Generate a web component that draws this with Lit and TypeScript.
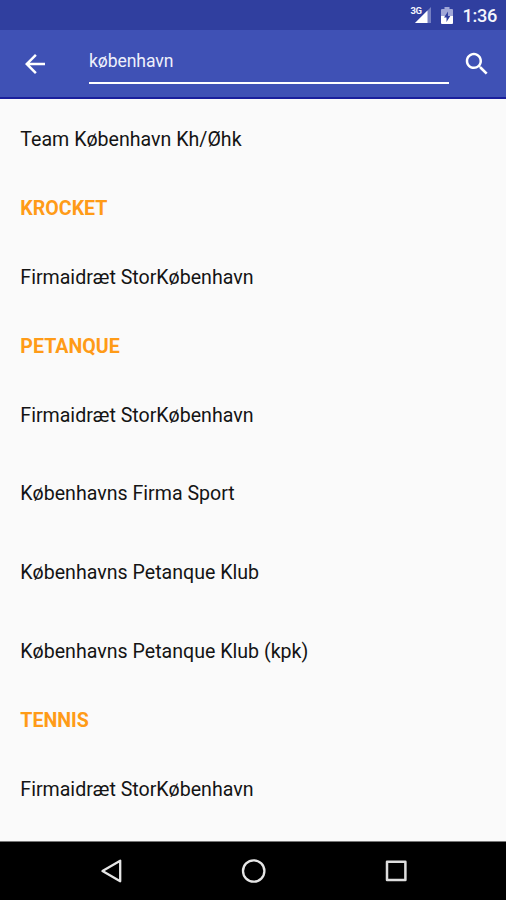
import { LitElement, html, css, svg } from "lit";
import { customElement } from "lit/decorators.js";

type Row = { text: string; header?: boolean };

const rows: Row[] = [
  { text: "Team København Kh/Øhk" },
  { text: "KROCKET", header: true },
  { text: "Firmaidræt StorKøbenhavn" },
  { text: "PETANQUE", header: true },
  { text: "Firmaidræt StorKøbenhavn" },
  { text: "Københavns Firma Sport" },
  { text: "Københavns Petanque Klub" },
  { text: "Københavns Petanque Klub (kpk)" },
  { text: "TENNIS", header: true },
  { text: "Firmaidræt StorKøbenhavn" },
];

@customElement("app-root")
export class AppRoot extends LitElement {
  static styles = css`
    :host {
      display: flex;
      flex-direction: column;
      height: 900px;
      overflow: hidden;
      background: #fafafa;
      font-family: Roboto, "Noto Sans", sans-serif;
      color: #141414;
    }
    svg { display: block; flex: none; }
    .status {
      flex: none;
      box-sizing: border-box;
      height: 30px;
      padding: 2px 9px 0 0;
      display: flex;
      justify-content: flex-end;
      align-items: center;
      background: #303f9f;
      color: #f4f5fc;
    }
    .signal {
      position: relative;
      width: 22px;
      height: 20px;
      margin-right: 9px;
    }
    .net {
      position: absolute;
      left: 1px;
      top: 0;
      font-size: 9.5px;
      line-height: 10px;
      font-weight: 700;
      letter-spacing: -0.3px;
    }
    .battery { margin-right: 8px; }
    .time {
      font-size: 18.2px;
      font-weight: 500;
      line-height: 24px;
      letter-spacing: -0.3px;
    }
    .bar {
      flex: none;
      box-sizing: border-box;
      height: 69px;
      padding: 0 14px 0 20px;
      display: flex;
      align-items: center;
      background: #3f51b5;
      border-bottom: 2px solid #1a1f9c;
    }
    .back { margin-top: 1px; }
    .field {
      flex: 1;
      height: 38px;
      box-sizing: border-box;
      margin: 2px 13px 0 39px;
      border-bottom: 2px solid #fff;
      color: #eef0fb;
      font-size: 17.6px;
      letter-spacing: -0.1px;
      line-height: 30px;
    }
    .list { flex: 1; overflow: hidden; padding-top: 1.2px; }
    .row {
      height: 78.75px;
      padding-left: 20.3px;
      display: flex;
      align-items: center;
      font-size: 19.6px;
      white-space: nowrap;
    }
    .row.header {
      height: 59px;
      color: #ff9b17;
      font-weight: 700;
    }
    .nav {
      flex: none;
      box-sizing: border-box;
      height: 59px;
      padding: 0 0 1px 1px;
      border-top: 1px solid #777;
      display: flex;
      align-items: center;
      justify-content: center;
      gap: 114px;
      background: #000;
    }
  `;

  private icon(d: string, name: string, size: number) {
    return html`<svg class=${name} width=${size} height=${size} viewBox="0 0 24 24" fill="#fff">${svg`<path d=${d}></path>`}</svg>`;
  }

  render() {
    return html`
      <div class="status">
        <div class="signal">
          <svg width="22" height="20" viewBox="0 0 22 20">
            <path d="M22 1V17H6Z" fill="#7680c2"></path>
            <path d="M18.500 4.500V17H6Z" fill="#fff"></path>
          </svg>
          <span class="net">3G</span>
        </div>
        <svg class="battery" width="14" height="18" viewBox="0 0 14 18">
          <path d="M4.500 0h5v2H12q1 0 1 1v6H1V3q0-1 1-1h2.500Z" fill="#a0a7d7"></path>
          <path d="M1 9h12v7q0 1-1 1H2q-1 0-1-1Z" fill="#fff"></path>
          <path d="M8 4.500L4 10.500h2.500V15L10.300 9H8Z" fill="#303f9f"></path>
        </svg>
        <span class="time">1:36</span>
      </div>
      <div class="bar">
        ${this.icon("M20 11H7.830l5.590-5.590L12 4l-8 8 8 8 1.410-1.410L7.830 13H20v-2z", "back", 30)}
        <div class="field">københavn</div>
        ${this.icon("M15.500 14h-.79l-.28-.27C15.410 12.590 16 11.110 16 9.500 16 5.910 13.090 3 9.500 3S3 5.910 3 9.500 5.910 16 9.500 16c1.610 0 3.090-.59 4.230-1.570l.27.28v.79l5 4.990L20.490 19l-4.990-5zm-6 0C7.010 14 5 11.990 5 9.500S7.010 5 9.500 5 14 7.010 14 9.500 11.990 14 9.500 14z", "search", 30)}
      </div>
      <div class="list">
        ${rows.map((r) => html`<div class="row ${r.header ? "header" : ""}">${r.text}</div>`)}
      </div>
      <div class="nav">
        <svg width="28" height="28" viewBox="0 0 28 28" fill="none" stroke="#e6e6e6" stroke-width="2.300" stroke-linejoin="round">
          <path d="M22.200 3.700V24.300L4.500 14Z"></path>
        </svg>
        <svg width="28" height="28" viewBox="0 0 28 28" fill="none" stroke="#e6e6e6" stroke-width="2.300">
          <circle cx="13.700" cy="14" r="10.700"></circle>
        </svg>
        <svg width="28" height="28" viewBox="0 0 28 28" fill="none" stroke="#dedede" stroke-width="2.500" stroke-linejoin="round">
          <rect x="5" y="4.700" width="18.400" height="18.400"></rect>
        </svg>
      </div>
    `;
  }
}
